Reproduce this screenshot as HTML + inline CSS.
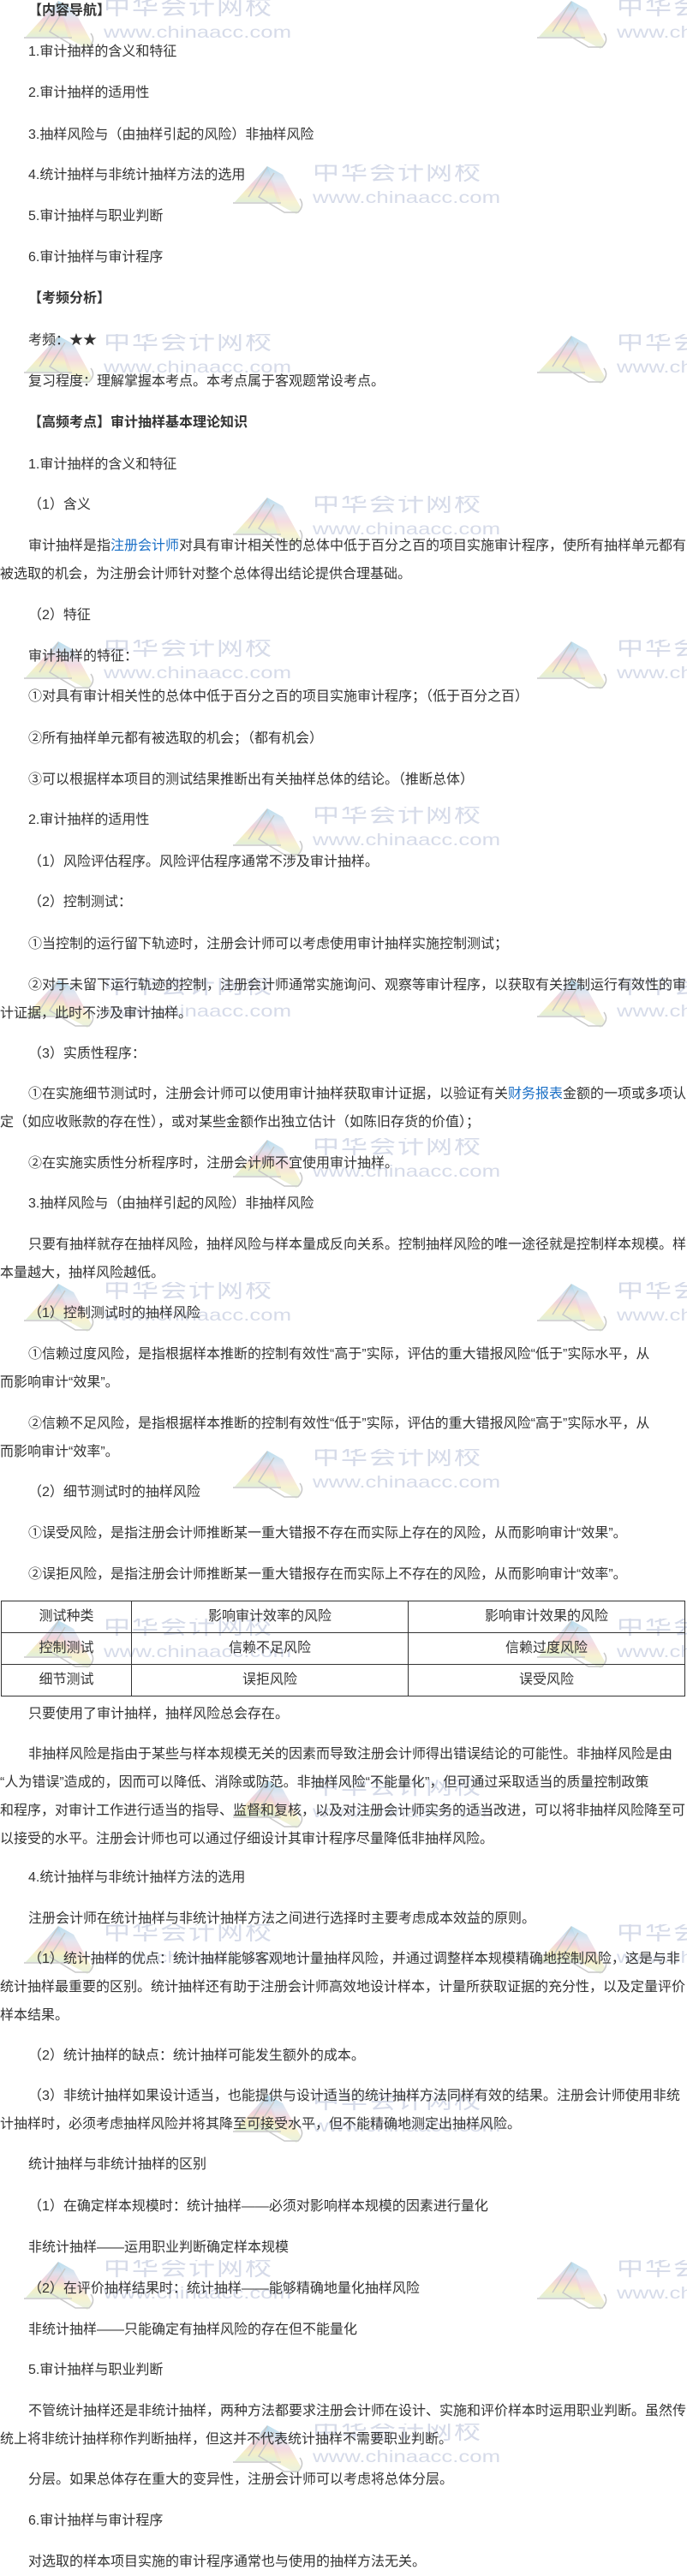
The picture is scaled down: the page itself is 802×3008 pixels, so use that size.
<!DOCTYPE html>
<html><head><meta charset="utf-8">
<style>
html,body{margin:0;padding:0;background:#fff;}
body{width:802px;height:3002px;position:relative;overflow:hidden;font-family:"Liberation Sans","Noto Sans CJK SC",sans-serif;font-size:16px;color:#333;}
.p{position:absolute;left:0;width:802px;overflow:hidden;white-space:nowrap;line-height:33px;text-indent:33px;z-index:2;}
.b{font-weight:bold;}
.a{color:#1a6fc6;}
.wm{position:absolute;width:400px;height:62px;z-index:1;overflow:hidden;}
.wm.r{width:175px;}
.wm svg{position:absolute;left:0;top:0;}
.wm .t1{position:absolute;left:93px;top:-4px;font-size:31px;line-height:31px;color:#d6dbe9;letter-spacing:2px;white-space:nowrap;transform:scaleY(0.85);transform-origin:top left;}
.wm .t2{position:absolute;left:93px;top:29px;font-size:23px;line-height:23px;color:#d6dbe9;white-space:nowrap;transform:scale(1.12,0.85);transform-origin:top left;}
table{position:absolute;left:1px;top:1869px;width:799px;border-collapse:collapse;z-index:2;}
td{border:1.5px solid #333;height:36px;padding:0;text-align:center;font-size:16px;line-height:20px;}
</style></head><body>

<svg width="0" height="0" style="position:absolute"><defs>
<linearGradient id="g" x1="0" y1="0" x2="0" y2="1">
<stop offset="0" stop-color="#a8d6ea"/><stop offset="0.3" stop-color="#dde0ec"/><stop offset="0.5" stop-color="#f2d3db"/><stop offset="0.75" stop-color="#f5efc6"/><stop offset="1" stop-color="#e2efd9"/></linearGradient></defs></svg>

<div class="wm" style="left:28px;top:-1px"><svg width="90" height="62"><polygon points="40,2 2,44 56,44" fill="url(#g)"/><path d="M40,2 L58,12 L80,52 L74,58 L52,46" fill="url(#g)" opacity="0.8"/><path d="M0,45 L56,45 M40,3 L18,38 M48,10 L30,38 L60,56 L76,56 Q84,48 78,40" fill="none" stroke="#c9c9c9" stroke-width="1.5"/></svg><div class="t1">中华会计网校</div><div class="t2">www.chinaacc.com</div></div>
<div class="wm r" style="left:627px;top:-1px"><svg width="90" height="62"><polygon points="40,2 2,44 56,44" fill="url(#g)"/><path d="M40,2 L58,12 L80,52 L74,58 L52,46" fill="url(#g)" opacity="0.8"/><path d="M0,45 L56,45 M40,3 L18,38 M48,10 L30,38 L60,56 L76,56 Q84,48 78,40" fill="none" stroke="#c9c9c9" stroke-width="1.5"/></svg><div class="t1">中华会计网校</div><div class="t2">www.chinaacc.com</div></div>
<div class="wm" style="left:272px;top:192px"><svg width="90" height="62"><polygon points="40,2 2,44 56,44" fill="url(#g)"/><path d="M40,2 L58,12 L80,52 L74,58 L52,46" fill="url(#g)" opacity="0.8"/><path d="M0,45 L56,45 M40,3 L18,38 M48,10 L30,38 L60,56 L76,56 Q84,48 78,40" fill="none" stroke="#c9c9c9" stroke-width="1.5"/></svg><div class="t1">中华会计网校</div><div class="t2">www.chinaacc.com</div></div>
<div class="wm" style="left:28px;top:390px"><svg width="90" height="62"><polygon points="40,2 2,44 56,44" fill="url(#g)"/><path d="M40,2 L58,12 L80,52 L74,58 L52,46" fill="url(#g)" opacity="0.8"/><path d="M0,45 L56,45 M40,3 L18,38 M48,10 L30,38 L60,56 L76,56 Q84,48 78,40" fill="none" stroke="#c9c9c9" stroke-width="1.5"/></svg><div class="t1">中华会计网校</div><div class="t2">www.chinaacc.com</div></div>
<div class="wm r" style="left:627px;top:390px"><svg width="90" height="62"><polygon points="40,2 2,44 56,44" fill="url(#g)"/><path d="M40,2 L58,12 L80,52 L74,58 L52,46" fill="url(#g)" opacity="0.8"/><path d="M0,45 L56,45 M40,3 L18,38 M48,10 L30,38 L60,56 L76,56 Q84,48 78,40" fill="none" stroke="#c9c9c9" stroke-width="1.5"/></svg><div class="t1">中华会计网校</div><div class="t2">www.chinaacc.com</div></div>
<div class="wm" style="left:272px;top:579px"><svg width="90" height="62"><polygon points="40,2 2,44 56,44" fill="url(#g)"/><path d="M40,2 L58,12 L80,52 L74,58 L52,46" fill="url(#g)" opacity="0.8"/><path d="M0,45 L56,45 M40,3 L18,38 M48,10 L30,38 L60,56 L76,56 Q84,48 78,40" fill="none" stroke="#c9c9c9" stroke-width="1.5"/></svg><div class="t1">中华会计网校</div><div class="t2">www.chinaacc.com</div></div>
<div class="wm" style="left:28px;top:747px"><svg width="90" height="62"><polygon points="40,2 2,44 56,44" fill="url(#g)"/><path d="M40,2 L58,12 L80,52 L74,58 L52,46" fill="url(#g)" opacity="0.8"/><path d="M0,45 L56,45 M40,3 L18,38 M48,10 L30,38 L60,56 L76,56 Q84,48 78,40" fill="none" stroke="#c9c9c9" stroke-width="1.5"/></svg><div class="t1">中华会计网校</div><div class="t2">www.chinaacc.com</div></div>
<div class="wm r" style="left:627px;top:747px"><svg width="90" height="62"><polygon points="40,2 2,44 56,44" fill="url(#g)"/><path d="M40,2 L58,12 L80,52 L74,58 L52,46" fill="url(#g)" opacity="0.8"/><path d="M0,45 L56,45 M40,3 L18,38 M48,10 L30,38 L60,56 L76,56 Q84,48 78,40" fill="none" stroke="#c9c9c9" stroke-width="1.5"/></svg><div class="t1">中华会计网校</div><div class="t2">www.chinaacc.com</div></div>
<div class="wm" style="left:272px;top:942px"><svg width="90" height="62"><polygon points="40,2 2,44 56,44" fill="url(#g)"/><path d="M40,2 L58,12 L80,52 L74,58 L52,46" fill="url(#g)" opacity="0.8"/><path d="M0,45 L56,45 M40,3 L18,38 M48,10 L30,38 L60,56 L76,56 Q84,48 78,40" fill="none" stroke="#c9c9c9" stroke-width="1.5"/></svg><div class="t1">中华会计网校</div><div class="t2">www.chinaacc.com</div></div>
<div class="wm" style="left:28px;top:1142px"><svg width="90" height="62"><polygon points="40,2 2,44 56,44" fill="url(#g)"/><path d="M40,2 L58,12 L80,52 L74,58 L52,46" fill="url(#g)" opacity="0.8"/><path d="M0,45 L56,45 M40,3 L18,38 M48,10 L30,38 L60,56 L76,56 Q84,48 78,40" fill="none" stroke="#c9c9c9" stroke-width="1.5"/></svg><div class="t1">中华会计网校</div><div class="t2">www.chinaacc.com</div></div>
<div class="wm r" style="left:627px;top:1142px"><svg width="90" height="62"><polygon points="40,2 2,44 56,44" fill="url(#g)"/><path d="M40,2 L58,12 L80,52 L74,58 L52,46" fill="url(#g)" opacity="0.8"/><path d="M0,45 L56,45 M40,3 L18,38 M48,10 L30,38 L60,56 L76,56 Q84,48 78,40" fill="none" stroke="#c9c9c9" stroke-width="1.5"/></svg><div class="t1">中华会计网校</div><div class="t2">www.chinaacc.com</div></div>
<div class="wm" style="left:272px;top:1329px"><svg width="90" height="62"><polygon points="40,2 2,44 56,44" fill="url(#g)"/><path d="M40,2 L58,12 L80,52 L74,58 L52,46" fill="url(#g)" opacity="0.8"/><path d="M0,45 L56,45 M40,3 L18,38 M48,10 L30,38 L60,56 L76,56 Q84,48 78,40" fill="none" stroke="#c9c9c9" stroke-width="1.5"/></svg><div class="t1">中华会计网校</div><div class="t2">www.chinaacc.com</div></div>
<div class="wm" style="left:28px;top:1497px"><svg width="90" height="62"><polygon points="40,2 2,44 56,44" fill="url(#g)"/><path d="M40,2 L58,12 L80,52 L74,58 L52,46" fill="url(#g)" opacity="0.8"/><path d="M0,45 L56,45 M40,3 L18,38 M48,10 L30,38 L60,56 L76,56 Q84,48 78,40" fill="none" stroke="#c9c9c9" stroke-width="1.5"/></svg><div class="t1">中华会计网校</div><div class="t2">www.chinaacc.com</div></div>
<div class="wm r" style="left:627px;top:1497px"><svg width="90" height="62"><polygon points="40,2 2,44 56,44" fill="url(#g)"/><path d="M40,2 L58,12 L80,52 L74,58 L52,46" fill="url(#g)" opacity="0.8"/><path d="M0,45 L56,45 M40,3 L18,38 M48,10 L30,38 L60,56 L76,56 Q84,48 78,40" fill="none" stroke="#c9c9c9" stroke-width="1.5"/></svg><div class="t1">中华会计网校</div><div class="t2">www.chinaacc.com</div></div>
<div class="wm" style="left:272px;top:1692px"><svg width="90" height="62"><polygon points="40,2 2,44 56,44" fill="url(#g)"/><path d="M40,2 L58,12 L80,52 L74,58 L52,46" fill="url(#g)" opacity="0.8"/><path d="M0,45 L56,45 M40,3 L18,38 M48,10 L30,38 L60,56 L76,56 Q84,48 78,40" fill="none" stroke="#c9c9c9" stroke-width="1.5"/></svg><div class="t1">中华会计网校</div><div class="t2">www.chinaacc.com</div></div>
<div class="wm" style="left:28px;top:1890px"><svg width="90" height="62"><polygon points="40,2 2,44 56,44" fill="url(#g)"/><path d="M40,2 L58,12 L80,52 L74,58 L52,46" fill="url(#g)" opacity="0.8"/><path d="M0,45 L56,45 M40,3 L18,38 M48,10 L30,38 L60,56 L76,56 Q84,48 78,40" fill="none" stroke="#c9c9c9" stroke-width="1.5"/></svg><div class="t1">中华会计网校</div><div class="t2">www.chinaacc.com</div></div>
<div class="wm r" style="left:627px;top:1890px"><svg width="90" height="62"><polygon points="40,2 2,44 56,44" fill="url(#g)"/><path d="M40,2 L58,12 L80,52 L74,58 L52,46" fill="url(#g)" opacity="0.8"/><path d="M0,45 L56,45 M40,3 L18,38 M48,10 L30,38 L60,56 L76,56 Q84,48 78,40" fill="none" stroke="#c9c9c9" stroke-width="1.5"/></svg><div class="t1">中华会计网校</div><div class="t2">www.chinaacc.com</div></div>
<div class="wm" style="left:272px;top:2077px"><svg width="90" height="62"><polygon points="40,2 2,44 56,44" fill="url(#g)"/><path d="M40,2 L58,12 L80,52 L74,58 L52,46" fill="url(#g)" opacity="0.8"/><path d="M0,45 L56,45 M40,3 L18,38 M48,10 L30,38 L60,56 L76,56 Q84,48 78,40" fill="none" stroke="#c9c9c9" stroke-width="1.5"/></svg><div class="t1">中华会计网校</div><div class="t2">www.chinaacc.com</div></div>
<div class="wm" style="left:28px;top:2247px"><svg width="90" height="62"><polygon points="40,2 2,44 56,44" fill="url(#g)"/><path d="M40,2 L58,12 L80,52 L74,58 L52,46" fill="url(#g)" opacity="0.8"/><path d="M0,45 L56,45 M40,3 L18,38 M48,10 L30,38 L60,56 L76,56 Q84,48 78,40" fill="none" stroke="#c9c9c9" stroke-width="1.5"/></svg><div class="t1">中华会计网校</div><div class="t2">www.chinaacc.com</div></div>
<div class="wm r" style="left:627px;top:2247px"><svg width="90" height="62"><polygon points="40,2 2,44 56,44" fill="url(#g)"/><path d="M40,2 L58,12 L80,52 L74,58 L52,46" fill="url(#g)" opacity="0.8"/><path d="M0,45 L56,45 M40,3 L18,38 M48,10 L30,38 L60,56 L76,56 Q84,48 78,40" fill="none" stroke="#c9c9c9" stroke-width="1.5"/></svg><div class="t1">中华会计网校</div><div class="t2">www.chinaacc.com</div></div>
<div class="wm" style="left:272px;top:2444px"><svg width="90" height="62"><polygon points="40,2 2,44 56,44" fill="url(#g)"/><path d="M40,2 L58,12 L80,52 L74,58 L52,46" fill="url(#g)" opacity="0.8"/><path d="M0,45 L56,45 M40,3 L18,38 M48,10 L30,38 L60,56 L76,56 Q84,48 78,40" fill="none" stroke="#c9c9c9" stroke-width="1.5"/></svg><div class="t1">中华会计网校</div><div class="t2">www.chinaacc.com</div></div>
<div class="wm" style="left:28px;top:2639px"><svg width="90" height="62"><polygon points="40,2 2,44 56,44" fill="url(#g)"/><path d="M40,2 L58,12 L80,52 L74,58 L52,46" fill="url(#g)" opacity="0.8"/><path d="M0,45 L56,45 M40,3 L18,38 M48,10 L30,38 L60,56 L76,56 Q84,48 78,40" fill="none" stroke="#c9c9c9" stroke-width="1.5"/></svg><div class="t1">中华会计网校</div><div class="t2">www.chinaacc.com</div></div>
<div class="wm r" style="left:627px;top:2639px"><svg width="90" height="62"><polygon points="40,2 2,44 56,44" fill="url(#g)"/><path d="M40,2 L58,12 L80,52 L74,58 L52,46" fill="url(#g)" opacity="0.8"/><path d="M0,45 L56,45 M40,3 L18,38 M48,10 L30,38 L60,56 L76,56 Q84,48 78,40" fill="none" stroke="#c9c9c9" stroke-width="1.5"/></svg><div class="t1">中华会计网校</div><div class="t2">www.chinaacc.com</div></div>
<div class="wm" style="left:272px;top:2830px"><svg width="90" height="62"><polygon points="40,2 2,44 56,44" fill="url(#g)"/><path d="M40,2 L58,12 L80,52 L74,58 L52,46" fill="url(#g)" opacity="0.8"/><path d="M0,45 L56,45 M40,3 L18,38 M48,10 L30,38 L60,56 L76,56 Q84,48 78,40" fill="none" stroke="#c9c9c9" stroke-width="1.5"/></svg><div class="t1">中华会计网校</div><div class="t2">www.chinaacc.com</div></div>

<div class="p b" style="top:-4px">【内容导航】</div>
<div class="p" style="top:44px">1.审计抽样的含义和特征</div>
<div class="p" style="top:92px">2.审计抽样的适用性</div>
<div class="p" style="top:141px">3.抽样风险与（由抽样引起的风险）非抽样风险</div>
<div class="p" style="top:188px">4.统计抽样与非统计抽样方法的选用</div>
<div class="p" style="top:236px">5.审计抽样与职业判断</div>
<div class="p" style="top:284px">6.审计抽样与审计程序</div>
<div class="p b" style="top:332px">【考频分析】</div>
<div class="p" style="top:381px">考频：★★</div>
<div class="p" style="top:429px">复习程度：理解掌握本考点。本考点属于客观题常设考点。</div>
<div class="p b" style="top:477px">【高频考点】审计抽样基本理论知识</div>
<div class="p" style="top:526px">1.审计抽样的含义和特征</div>
<div class="p" style="top:573px">（1）含义</div>
<div class="p" style="top:621px">审计抽样是指<span class="a">注册会计师</span>对具有审计相关性的总体中低于百分之百的项目实施审计程序，使所有抽样单元都有<br>被选取的机会，为注册会计师针对整个总体得出结论提供合理基础。</div>
<div class="p" style="top:702px">（2）特征</div>
<div class="p" style="top:750px">审计抽样的特征：</div>
<div class="p" style="top:797px">①对具有审计相关性的总体中低于百分之百的项目实施审计程序；（低于百分之百）</div>
<div class="p" style="top:846px">②所有抽样单元都有被选取的机会；（都有机会）</div>
<div class="p" style="top:894px">③可以根据样本项目的测试结果推断出有关抽样总体的结论。（推断总体）</div>
<div class="p" style="top:941px">2.审计抽样的适用性</div>
<div class="p" style="top:990px">（1）风险评估程序。风险评估程序通常不涉及审计抽样。</div>
<div class="p" style="top:1037px">（2）控制测试：</div>
<div class="p" style="top:1086px">①当控制的运行留下轨迹时，注册会计师可以考虑使用审计抽样实施控制测试；</div>
<div class="p" style="top:1134px">②对于未留下运行轨迹的控制，注册会计师通常实施询问、观察等审计程序，以获取有关控制运行有效性的审<br>计证据，此时不涉及审计抽样。</div>
<div class="p" style="top:1214px">（3）实质性程序：</div>
<div class="p" style="top:1261px">①在实施细节测试时，注册会计师可以使用审计抽样获取审计证据，以验证有关<span class="a">财务报表</span>金额的一项或多项认<br>定（如应收账款的存在性），或对某些金额作出独立估计（如陈旧存货的价值）；</div>
<div class="p" style="top:1342px">②在实施实质性分析程序时，注册会计师不宜使用审计抽样。</div>
<div class="p" style="top:1389px">3.抽样风险与（由抽样引起的风险）非抽样风险</div>
<div class="p" style="top:1437px">只要有抽样就存在抽样风险，抽样风险与样本量成反向关系。控制抽样风险的唯一途径就是控制样本规模。样<br>本量越大，抽样风险越低。</div>
<div class="p" style="top:1517px">（1）控制测试时的抽样风险</div>
<div class="p" style="top:1565px">①信赖过度风险，是指根据样本推断的控制有效性“高于”实际，评估的重大错报风险“低于”实际水平，从<br>而影响审计“效果”。</div>
<div class="p" style="top:1646px">②信赖不足风险，是指根据样本推断的控制有效性“低于”实际，评估的重大错报风险“高于”实际水平，从<br>而影响审计“效率”。</div>
<div class="p" style="top:1726px">（2）细节测试时的抽样风险</div>
<div class="p" style="top:1774px">①误受风险，是指注册会计师推断某一重大错报不存在而实际上存在的风险，从而影响审计“效果”。</div>
<div class="p" style="top:1822px">②误拒风险，是指注册会计师推断某一重大错报存在而实际上不存在的风险，从而影响审计“效率”。</div>

<table>
<tr><td style="width:151px">测试种类</td><td style="width:322px">影响审计效率的风险</td><td>影响审计效果的风险</td></tr>
<tr><td>控制测试</td><td>信赖不足风险</td><td>信赖过度风险</td></tr>
<tr><td>细节测试</td><td>误拒风险</td><td>误受风险</td></tr>
</table>

<div class="p" style="top:1985px">只要使用了审计抽样，抽样风险总会存在。</div>
<div class="p" style="top:2032px">非抽样风险是指由于某些与样本规模无关的因素而导致注册会计师得出错误结论的可能性。非抽样风险是由<br>“人为错误”造成的，因而可以降低、消除或防范。非抽样风险“不能量化”，但可通过采取适当的质量控制政策<br>和程序，对审计工作进行适当的指导、监督和复核，以及对注册会计师实务的适当改进，可以将非抽样风险降至可<br>以接受的水平。注册会计师也可以通过仔细设计其审计程序尽量降低非抽样风险。</div>
<div class="p" style="top:2176px">4.统计抽样与非统计抽样方法的选用</div>
<div class="p" style="top:2224px">注册会计师在统计抽样与非统计抽样方法之间进行选择时主要考虑成本效益的原则。</div>
<div class="p" style="top:2271px">（1）统计抽样的优点：统计抽样能够客观地计量抽样风险，并通过调整样本规模精确地控制风险，这是与非<br>统计抽样最重要的区别。统计抽样还有助于注册会计师高效地设计样本，计量所获取证据的充分性，以及定量评价<br>样本结果。</div>
<div class="p" style="top:2384px">（2）统计抽样的缺点：统计抽样可能发生额外的成本。</div>
<div class="p" style="top:2431px">（3）非统计抽样如果设计适当，也能提供与设计适当的统计抽样方法同样有效的结果。注册会计师使用非统<br>计抽样时，必须考虑抽样风险并将其降至可接受水平，但不能精确地测定出抽样风险。</div>
<div class="p" style="top:2511px">统计抽样与非统计抽样的区别</div>
<div class="p" style="top:2560px">（1）在确定样本规模时：统计抽样——必须对影响样本规模的因素进行量化</div>
<div class="p" style="top:2608px">非统计抽样——运用职业判断确定样本规模</div>
<div class="p" style="top:2656px">（2）在评价抽样结果时：统计抽样——能够精确地量化抽样风险</div>
<div class="p" style="top:2704px">非统计抽样——只能确定有抽样风险的存在但不能量化</div>
<div class="p" style="top:2751px">5.审计抽样与职业判断</div>
<div class="p" style="top:2799px">不管统计抽样还是非统计抽样，两种方法都要求注册会计师在设计、实施和评价样本时运用职业判断。虽然传<br>统上将非统计抽样称作判断抽样，但这并不代表统计抽样不需要职业判断。</div>
<div class="p" style="top:2879px">分层。如果总体存在重大的变异性，注册会计师可以考虑将总体分层。</div>
<div class="p" style="top:2927px">6.审计抽样与审计程序</div>
<div class="p" style="top:2975px">对选取的样本项目实施的审计程序通常也与使用的抽样方法无关。</div>

</body></html>
